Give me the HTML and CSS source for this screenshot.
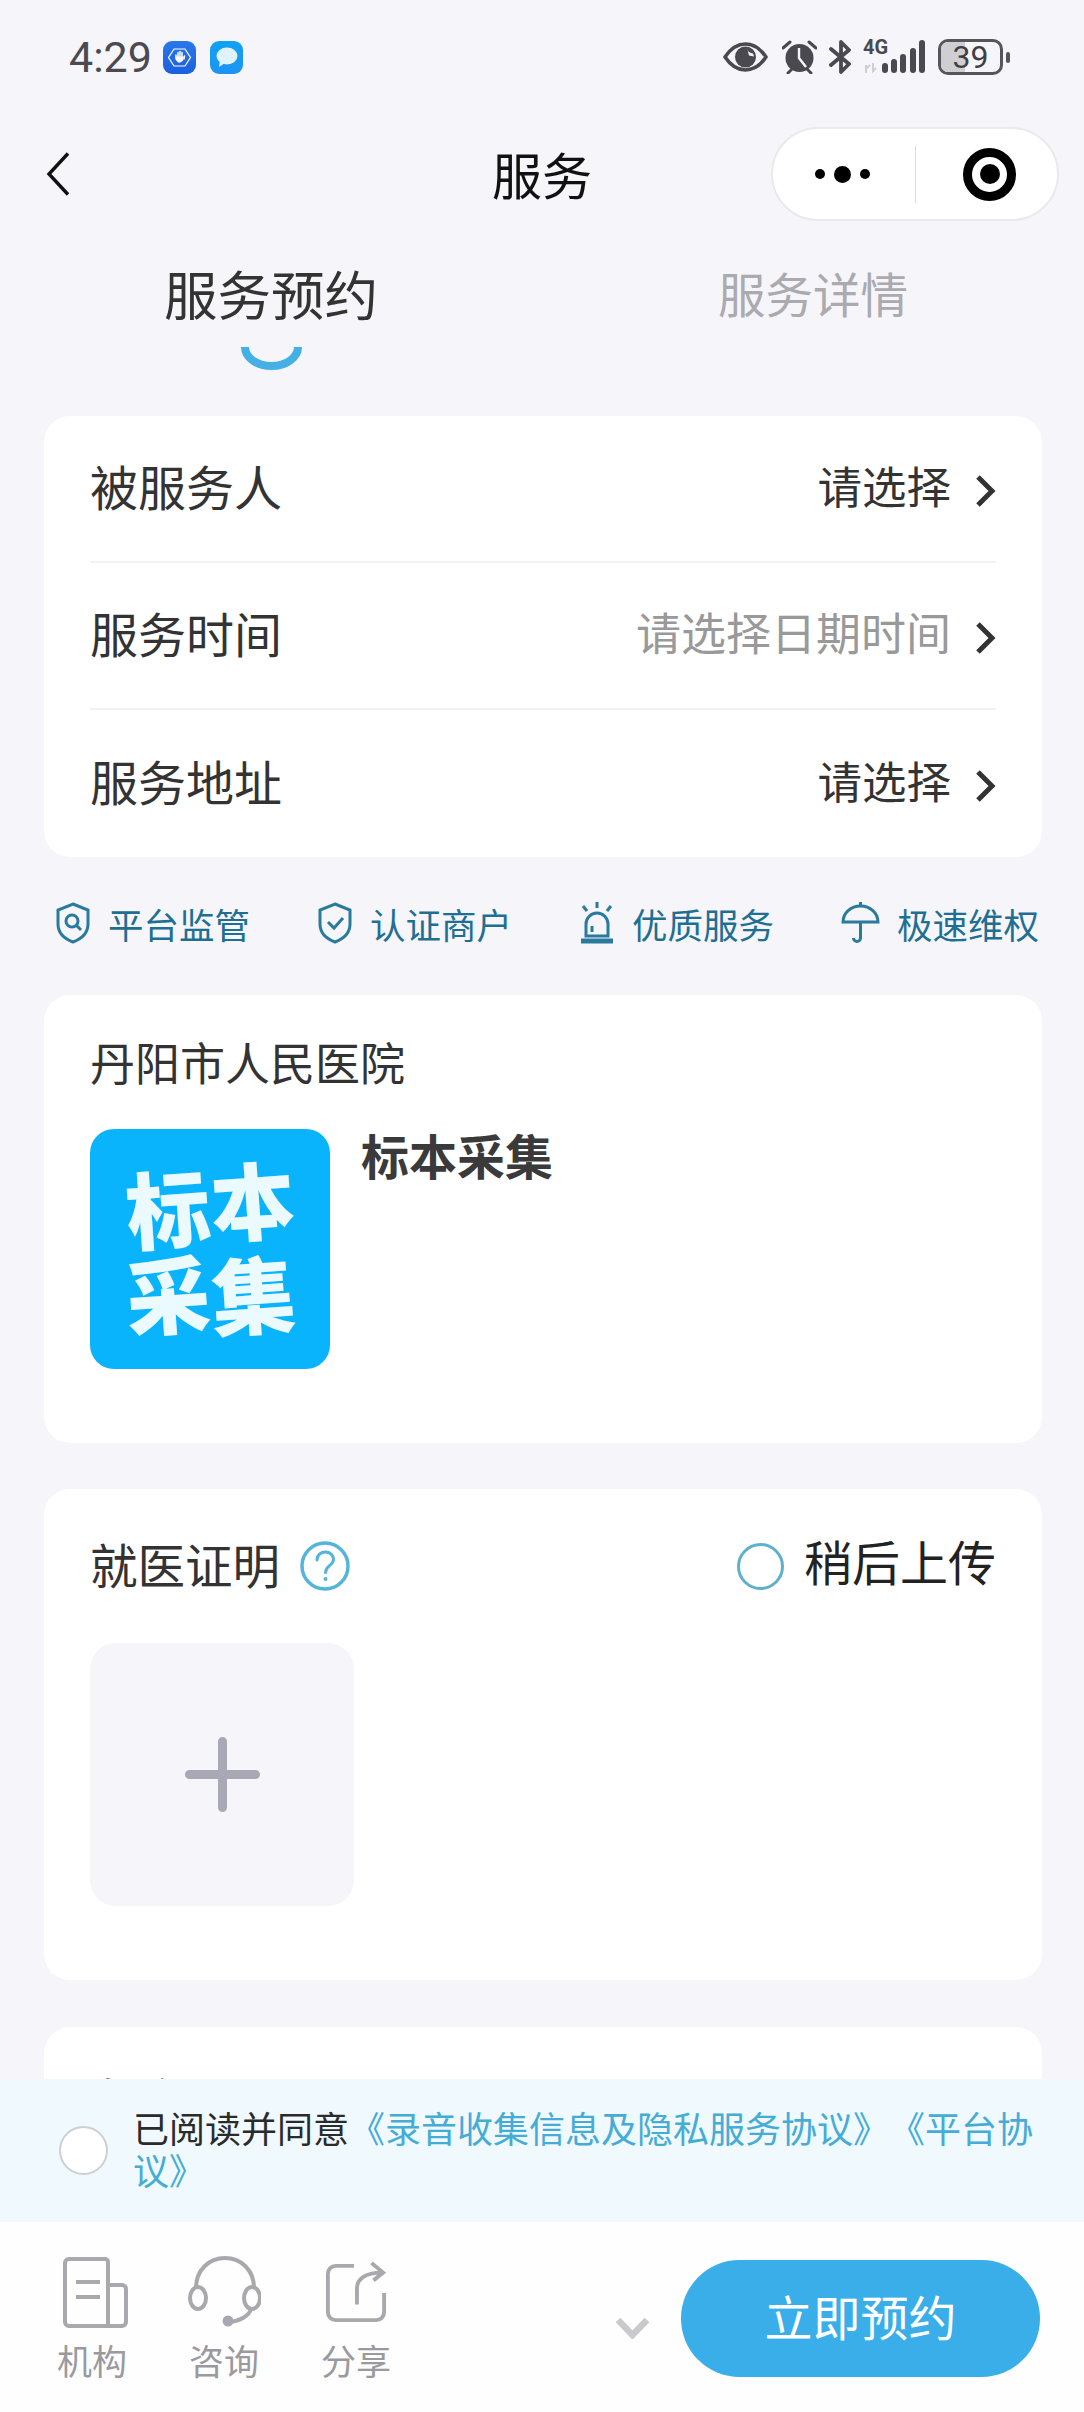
FILE: index.html
```html
<!DOCTYPE html>
<html lang="zh-CN">
  <head>
    <meta charset="UTF-8" />
    <meta name="viewport" content="width=device-width, initial-scale=1.0" />
    <title>服务</title>
    <link rel="stylesheet" href="styles.css">
  </head>
  <body>
    <div class="page">
      <div class="status-bar">
        <span class="time">4:29</span>
        <svg class="app-icon" viewBox="0 0 33 33">
          <defs>
            <linearGradient id="appBlue" x1="0" y1="0" x2="0" y2="1">
              <stop offset="0" stop-color="#2b78ea" />
              <stop offset="1" stop-color="#1b5fdc" />
            </linearGradient>
            <linearGradient id="appSky" x1="0" y1="0" x2="0" y2="1">
              <stop offset="0" stop-color="#10a2f2" />
              <stop offset="1" stop-color="#1d94f4" />
            </linearGradient>
          </defs>
          <rect width="33" height="33" rx="9" fill="url(#appBlue)" />
          <path d="M11 8h11l5.500 8.500L22 25H11l-5.500-8.500z" fill="none" stroke="#fff" stroke-width="1.200" />
          <path d="M13 17v-3M15 16v-4.500M17 16v-5.500M19 16v-4.500M21 18l.5-3" stroke="#fff" stroke-width="1.500" stroke-linecap="round" />
          <path d="M12.500 15.500h8.500l-1 4-2.500 2h-2.500l-2.500-3z" fill="#fff" />
        </svg>
        <svg class="app-icon app-icon-last" viewBox="0 0 33 33">
          <rect width="33" height="33" rx="9" fill="url(#appSky)" />
          <ellipse cx="17" cy="15" rx="10.500" ry="8.500" fill="#dff3fd" />
          <path d="M10 19l-1 7 6-4z" fill="#dff3fd" />
        </svg>
        <svg class="st-eye" viewBox="0 0 45 30">
          <path d="M2 15C8 6 15 2 22.500 2S37 6 43 15C37 24 30 28 22.500 28S8 24 2 15z" fill="none" stroke="#49494f" stroke-width="3.600" stroke-linejoin="round" />
          <circle cx="22.500" cy="15" r="10.500" fill="#49494f" />
          <path d="M24 5.500a6 6 0 0 0 6 6l1 3-5-1z" fill="#f5f5fa" />
        </svg>
        <svg class="st-alarm" viewBox="0 0 35 34">
          <circle cx="17.500" cy="18" r="14" fill="#49494f" />
          <path d="M1 8l7-6M34 8l-7-6M6 33l4-4M29 33l-4-4" stroke="#49494f" stroke-width="3" stroke-linecap="round" />
          <path d="M17 8v10l7 9" fill="none" stroke="#f5f5fa" stroke-width="2.400" />
        </svg>
        <svg class="st-bt" viewBox="0 0 22 34">
          <path d="M2 9l18 15-8 8V2l8 8L2 25" fill="none" stroke="#49494f" stroke-width="3.800" stroke-linejoin="round" stroke-linecap="round" />
        </svg>
        <div class="st-signal">
          <span class="st-net">4G</span>
          <svg class="st-bars" viewBox="0 0 62 34">
            <path d="M3 33V25M7 25l-3 3M10 23v8l3-3" fill="none" stroke="#cfcfd3" stroke-width="2" />
            <rect x="19" y="23" width="6" height="10" rx="3" fill="#49494f" />
            <rect x="28" y="19" width="6" height="14" rx="3" fill="#49494f" />
            <rect x="37" y="14" width="6" height="19" rx="3" fill="#49494f" />
            <rect x="47" y="8" width="6" height="25" rx="3" fill="#49494f" />
            <rect x="56" y="0" width="6" height="33" rx="3" fill="#49494f" />
          </svg>
        </div>
        <div class="st-battery">
          <div class="st-battery-fill"></div>
          <span class="st-battery-num">39</span>
        </div>
        <div class="st-battery-nub"></div>
      </div>

      <div class="nav-bar">
        <svg class="nav-back" viewBox="0 0 24 44">
          <path d="M22 1.500L3 22l19 20.500" fill="none" stroke="#111" stroke-width="3.400" />
        </svg>
        <div class="nav-title">服务</div>
        <div class="capsule">
          <div class="capsule-dots">
            <span class="dot"></span>
            <span class="dot dot-big"></span>
            <span class="dot"></span>
          </div>
          <div class="capsule-line"></div>
          <div class="capsule-target"><span></span></div>
        </div>
      </div>

      <div class="tabs">
        <div class="tab tab-active">
          <div class="tab-text">服务预约</div>
          <svg class="tab-mark" viewBox="0 0 61 23">
            <path d="M4 0a26.500 19 0 0 0 53 0" fill="none" stroke="#45b0e6" stroke-width="8" />
          </svg>
        </div>
        <div class="tab">
          <div class="tab-text">服务详情</div>
        </div>
      </div>

      <div class="card form-card">
        <div class="form-row">
          <span>被服务人</span>
          <span class="form-value">请选择</span>
          <svg class="chevron" viewBox="0 0 21 32"><path d="M3 2l14 14L3 30" fill="none" stroke="#333" stroke-width="5" /></svg>
        </div>
        <div class="form-row">
          <span>服务时间</span>
          <span class="form-value form-empty">请选择日期时间</span>
          <svg class="chevron" viewBox="0 0 21 32"><path d="M3 2l14 14L3 30" fill="none" stroke="#333" stroke-width="5" /></svg>
        </div>
        <div class="form-row">
          <span>服务地址</span>
          <span class="form-value">请选择</span>
          <svg class="chevron" viewBox="0 0 21 32"><path d="M3 2l14 14L3 30" fill="none" stroke="#333" stroke-width="5" /></svg>
        </div>
      </div>

      <div class="trust-row">
        <div class="trust-item">
          <svg class="trust-icon" viewBox="0 0 36 42">
            <path d="M18 2l15 6v14c0 9-7 15-15 18C10 37 3 31 3 22V8z" />
            <circle cx="17" cy="19" r="6" />
            <path d="M21.500 23.500L26 28" />
          </svg>
          <span>平台监管</span>
        </div>
        <div class="trust-item">
          <svg class="trust-icon" viewBox="0 0 36 42">
            <path d="M18 2l15 6v14c0 9-7 15-15 18C10 37 3 31 3 22V8z" />
            <path d="M11 20l6 6 9-10" />
          </svg>
          <span>认证商户</span>
        </div>
        <div class="trust-item">
          <svg class="trust-icon" viewBox="0 0 36 42">
            <path d="M18 0v6M4 4l4 5M32 4l-4 5" />
            <path d="M7 34V22a11 11 0 0 1 22 0v12z" />
            <path d="M13 30v-6" />
            <path d="M2 39h32" class="trust-thick" />
          </svg>
          <span>优质服务</span>
        </div>
        <div class="trust-item">
          <svg class="trust-icon trust-icon-wide" viewBox="0 0 39 42">
            <path d="M19.500 0v4" />
            <path d="M2 20a17.500 16 0 0 1 35 0z" />
            <path d="M19.500 20v16a3.500 3.500 0 0 1-7 0" />
          </svg>
          <span>极速维权</span>
        </div>
      </div>

      <div class="card org-card">
        <div class="card-title">丹阳市人民医院</div>
        <div class="org-body">
          <div class="org-pic">
            <span>标</span><span class="org-pic-up">本</span><span>采</span><span>集</span>
          </div>
          <div class="org-name">标本采集</div>
        </div>
      </div>

      <div class="card proof-card">
        <div class="proof-head">
          <span class="card-title">就医证明</span>
          <svg class="help-icon" viewBox="0 0 50 50">
            <circle cx="25" cy="25" r="23" fill="none" stroke="#55b4dc" stroke-width="3.500" />
            <path d="M17 19c0-5 4-8 8.500-8s8 3 8 7.500c0 6-8 6-8 13" fill="none" stroke="#55b4dc" stroke-width="3" stroke-linecap="round" />
            <circle cx="25.500" cy="38" r="2" fill="#55b4dc" />
          </svg>
          <span class="later-radio"></span>
          <span class="later-text">稍后上传</span>
        </div>
        <div class="upload-box">
          <svg class="upload-plus" viewBox="0 0 75 75">
            <path d="M37.500 4.500v66M4.500 37.500h66" stroke="#a9a9b5" stroke-width="9" stroke-linecap="round" />
          </svg>
        </div>
      </div>

      <div class="card note-card">
        <div class="card-title">备注</div>
      </div>

      <div class="footer">
        <div class="agree">
          <span class="agree-radio"></span>
          <p class="agree-text">已阅读并同意<a href="#">《录音收集信息及隐私服务协议》</a><a href="#">《平台协议》</a></p>
        </div>
        <div class="action-bar">
          <div class="action-item">
            <svg class="action-icon" viewBox="-4 0 74 72">
              <path d="M10 3h36a3 3 0 0 1 3 3v64H10a4 4 0 0 1-4-4V7a4 4 0 0 1 4-4zM49 29h14a4 4 0 0 1 4 4v33a4 4 0 0 1-4 4H49M17 26h24M17 41h24" />
            </svg>
            <span>机构</span>
          </div>
          <div class="action-item">
            <svg class="action-icon" viewBox="-1 0 74 72">
              <path d="M8 32C8 14 21 2 37 2s29 12 29 30" />
              <ellipse cx="10" cy="42" rx="8" ry="11" />
              <ellipse cx="64" cy="42" rx="8" ry="11" />
              <path d="M63 53c-2 7-11 12-22 13" />
              <circle class="action-fill" cx="40" cy="65" r="5.500" />
            </svg>
            <span>咨询</span>
          </div>
          <div class="action-item">
            <svg class="action-icon action-icon-share" viewBox="0 0 64 64">
              <path d="M30 5H11a8 8 0 0 0-8 8v40a8 8 0 0 0 8 8h42a8 8 0 0 0 8-8V33M33 45V28c0-9 8-16 26-16M48 2l12 10-10 8" />
            </svg>
            <span>分享</span>
          </div>
          <svg class="more-arrow" viewBox="0 0 35 21">
            <path d="M3 2l14.500 15L32 2" fill="none" stroke="#c9c9ce" stroke-width="6.500" />
          </svg>
          <div class="book-btn">立即预约</div>
        </div>
      </div>
    </div>
  </body>
</html>
```

FILE: styles.css
```css
* {
  box-sizing: border-box;
}

body {
  margin: 0;
  font-family: "Noto Sans CJK SC", "Noto Sans", sans-serif;
  color: #333;
}

.page {
  position: relative;
  width: 1084px;
  height: 2412px;
  overflow: hidden;
  background: #f5f5fa;
}

/* status bar */
.status-bar {
  display: flex;
  align-items: center;
  height: 114px;
  padding-left: 69px;
}

.time {
  width: 94px;
  font-family: "Roboto", sans-serif;
  font-size: 43px;
  color: #4a4a50;
}

.app-icon {
  width: 33px;
  height: 33px;
  margin-right: 14px;
}

.app-icon-last {
  margin-right: 480px;
}

.st-eye {
  width: 45px;
  height: 30px;
  margin-right: 14px;
}

.st-alarm {
  width: 35px;
  height: 34px;
  margin-right: 12px;
}

.st-bt {
  width: 22px;
  height: 34px;
  margin-right: 12px;
}

.st-signal {
  position: relative;
  width: 62px;
  height: 34px;
  margin-right: 13px;
}

.st-net {
  position: absolute;
  left: 0;
  top: -3px;
  font-family: "Roboto", sans-serif;
  font-size: 20px;
  font-weight: 700;
  line-height: 20px;
  color: #49494f;
}

.st-bars {
  display: block;
  width: 62px;
  height: 34px;
}

.st-battery {
  position: relative;
  width: 65px;
  height: 36px;
  border: 3px solid #55555b;
  border-radius: 10px;
}

.st-battery-fill {
  width: 24px;
  height: 100%;
  border-radius: 7px 0 0 7px;
  background: #cfcfd3;
}

.st-battery-num {
  position: absolute;
  left: 0;
  right: 0;
  top: -1px;
  text-align: center;
  font-family: "Roboto", sans-serif;
  font-size: 32px;
  line-height: 32px;
  color: #3f3f45;
}

.st-battery-nub {
  width: 4px;
  height: 11px;
  margin-left: 3px;
  border-radius: 2px;
  background: #55555b;
}

/* nav */
.nav-bar {
  display: grid;
  grid-template-columns: 1fr auto 1fr;
  align-items: center;
  height: 120px;
}

.nav-back {
  width: 24px;
  height: 44px;
  margin-left: 46px;
}

.nav-title {
  margin-bottom: 3px;
  font-size: 50px;
  line-height: 60px;
  color: #111;
}

.capsule {
  display: flex;
  align-items: center;
  justify-self: end;
  width: 288px;
  height: 94px;
  margin-right: 25px;
  border: 2px solid #e9e9ee;
  border-radius: 47px;
  background: #fff;
}

.capsule-dots {
  display: flex;
  align-items: center;
  justify-content: center;
  gap: 9px;
  width: 138px;
  margin-right: 4px;
}

.dot {
  width: 10px;
  height: 10px;
  border-radius: 50%;
  background: #000;
}

.dot-big {
  width: 17px;
  height: 17px;
}

.capsule-line {
  width: 1px;
  height: 57px;
  background: #ddd;
}

.capsule-target {
  display: flex;
  align-items: center;
  justify-content: center;
  width: 53px;
  height: 53px;
  margin-left: 47px;
  border: 9px solid #000;
  border-radius: 50%;
}

.capsule-target span {
  width: 20px;
  height: 20px;
  border-radius: 50%;
  background: #000;
}

/* tabs */
.tabs {
  display: grid;
  grid-template-columns: 1fr 1fr;
  height: 182px;
  padding-top: 28px;
}

.tab {
  display: flex;
  flex-direction: column;
  align-items: center;
}

.tab-text {
  font-size: 47.5px;
  line-height: 62px;
  color: #aaaaaf;
}

.tab-active .tab-text {
  font-size: 53.5px;
  color: #333;
}

.tab-mark {
  width: 61px;
  height: 23px;
  margin-top: 23px;
}

/* cards */
.card {
  width: 998px;
  margin-left: 44px;
  padding: 0 46px;
  border-radius: 26px;
  background: #fff;
}

.card-title {
  font-size: 45px;
  line-height: 62px;
  color: #333;
}

.form-card {
  height: 441px;
}

.form-row {
  display: flex;
  align-items: center;
  height: 147px;
  padding-bottom: 8px;
  border-bottom: 2px solid #f2f2f4;
  font-size: 48px;
}

.form-row:last-child {
  border-bottom: none;
}

.form-value {
  margin-left: auto;
  margin-right: 24px;
  font-size: 44.5px;
}

.form-empty {
  font-size: 45px;
  color: #999;
}

.chevron {
  width: 21px;
  height: 32px;
  margin-top: 12px;
}

/* trust labels */
.trust-row {
  display: flex;
  align-items: center;
  justify-content: space-between;
  height: 138px;
  padding: 0 45px 6px 55px;
}

.trust-item {
  display: flex;
  align-items: center;
  gap: 17px;
  font-size: 35.5px;
  color: #1f6f93;
}

.trust-icon {
  width: 36px;
  height: 42px;
  fill: none;
  stroke: #2a7a9e;
  stroke-width: 3;
}

.trust-icon-wide {
  width: 39px;
}

.trust-thick {
  stroke-width: 5;
}

/* org card */
.org-card {
  height: 448px;
  padding-top: 36px;
}

.org-body {
  display: flex;
  gap: 31px;
  margin-top: 36px;
}

.org-pic {
  display: grid;
  grid-template-columns: 86px 84px;
  grid-template-rows: 86px 86px;
  place-content: center;
  width: 240px;
  height: 240px;
  border-radius: 24px;
  background: #0ab4fd;
  font-size: 84px;
  font-weight: 900;
  line-height: 86px;
  text-align: center;
  color: #eafaff;
}

.org-pic span {
  transform: rotate(-4deg);
}

.org-pic .org-pic-up {
  transform: rotate(-4deg) translateY(-8px);
}

.org-name {
  font-size: 48px;
  font-weight: 700;
  line-height: 50px;
  color: #3a3a3a;
}

/* proof card */
.proof-card {
  height: 491px;
  margin-top: 46px;
  padding-top: 46px;
}

.proof-head {
  display: flex;
  align-items: center;
  height: 62px;
}

.proof-head .card-title {
  margin-bottom: 4px;
  font-size: 47.5px;
}

.help-icon {
  width: 50px;
  height: 50px;
  margin-left: 20px;
}

.later-radio {
  width: 47px;
  height: 47px;
  margin-left: auto;
  border: 3px solid #5fb0cc;
  border-radius: 50%;
}

.later-text {
  margin-left: 20px;
  margin-bottom: 12px;
  font-size: 48px;
  line-height: 62px;
  color: #222;
}

.upload-box {
  display: flex;
  align-items: center;
  justify-content: center;
  width: 264px;
  height: 263px;
  margin-top: 46px;
  border-radius: 26px;
  background: #f5f5fa;
}

.upload-plus {
  width: 75px;
  height: 75px;
}

.note-card {
  height: 400px;
  margin-top: 47px;
  padding-top: 40px;
}

/* fixed footer */
.footer {
  position: absolute;
  left: 0;
  right: 0;
  bottom: 0;
}

.agree {
  display: flex;
  align-items: center;
  gap: 25px;
  height: 143px;
  padding: 0 40px 0 59px;
  background: #f0f9fe;
}

.agree-radio {
  flex: none;
  width: 49px;
  height: 49px;
  border: 2px solid #cfcfd2;
  border-radius: 50%;
  background: #fff;
}

.agree-text {
  margin: 0 0 5px;
  font-size: 36px;
  line-height: 42px;
  text-spacing-trim: space-all;
  color: #2b2b2b;
}

.agree-text a {
  color: #45acd6;
  text-decoration: none;
}

.action-bar {
  display: flex;
  align-items: flex-start;
  height: 190px;
  padding: 34px 44px 0 42px;
  background: #fefefe;
}

.action-item {
  display: flex;
  flex-direction: column;
  align-items: center;
  width: 100px;
  margin-right: 32px;
  font-size: 35px;
  line-height: 48px;
  color: #9a9a9e;
}

.action-icon {
  width: 74px;
  height: 72px;
  margin-bottom: 8px;
  fill: none;
  stroke: #a8a8ad;
  stroke-width: 4;
}

.action-icon-share {
  width: 62px;
  height: 62px;
  margin-top: 5px;
  margin-bottom: 13px;
}

.action-fill {
  fill: #a8a8b2;
  stroke: none;
}

.more-arrow {
  width: 35px;
  height: 21px;
  margin-top: 62px;
  margin-left: auto;
  margin-right: 31px;
}

.book-btn {
  width: 359px;
  height: 117px;
  margin-top: 4px;
  border-radius: 59px;
  background: #3aaee8;
  font-size: 48px;
  line-height: 110px;
  text-align: center;
  color: #fff;
}
```
